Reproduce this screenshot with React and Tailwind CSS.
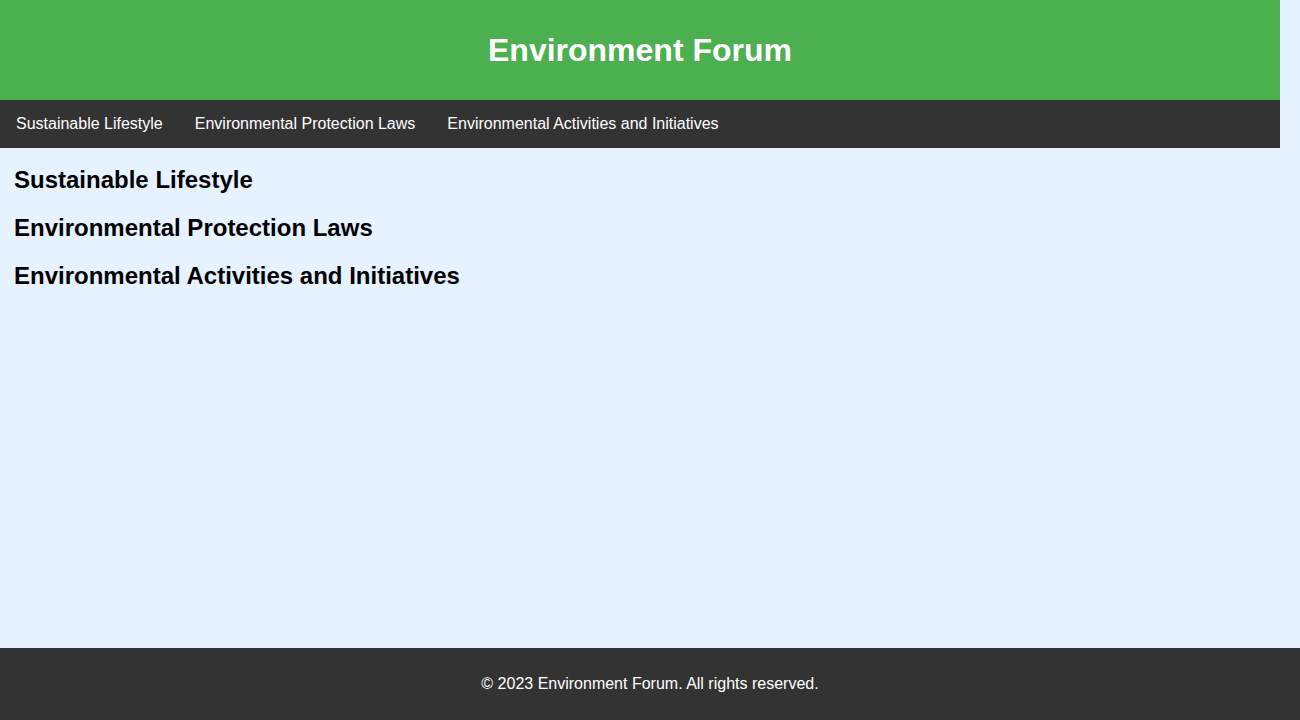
const NAV_ITEMS = [
  "Sustainable Lifestyle",
  "Environmental Protection Laws",
  "Environmental Activities and Initiatives",
];

export default function App() {
  return (
    <div
      className="min-h-screen flex flex-col bg-[#e6f2ff] text-black"
      style={{ fontFamily: '"Liberation Sans", Arial, sans-serif' }}
    >
      <div className="w-[1280px]">
        <header className="bg-[#4caf50] px-2 pt-[30px] pb-[30px]">
          <h1 className="text-[32px] leading-[40px] font-bold text-white text-center">
            Environment Forum
          </h1>
        </header>

        <nav className="bg-[#333333] flex">
          {NAV_ITEMS.map((item) => (
            <a
              key={item}
              href="#"
              className="block px-4 py-[14px] text-[16px] leading-[20px] text-white"
            >
              {item}
            </a>
          ))}
        </nav>

        <main className="px-[14px] pt-4 pb-[17px] flex flex-col gap-4">
          {NAV_ITEMS.map((item) => (
            <section key={item}>
              <h2 className="text-[24px] leading-[32px] font-bold">{item}</h2>
            </section>
          ))}
        </main>
      </div>

      <footer className="mt-auto bg-[#333333] px-2 py-[26px]">
        <p className="text-[16px] leading-[20px] text-white text-center">
          © 2023 Environment Forum. All rights reserved.
        </p>
      </footer>
    </div>
  );
}
